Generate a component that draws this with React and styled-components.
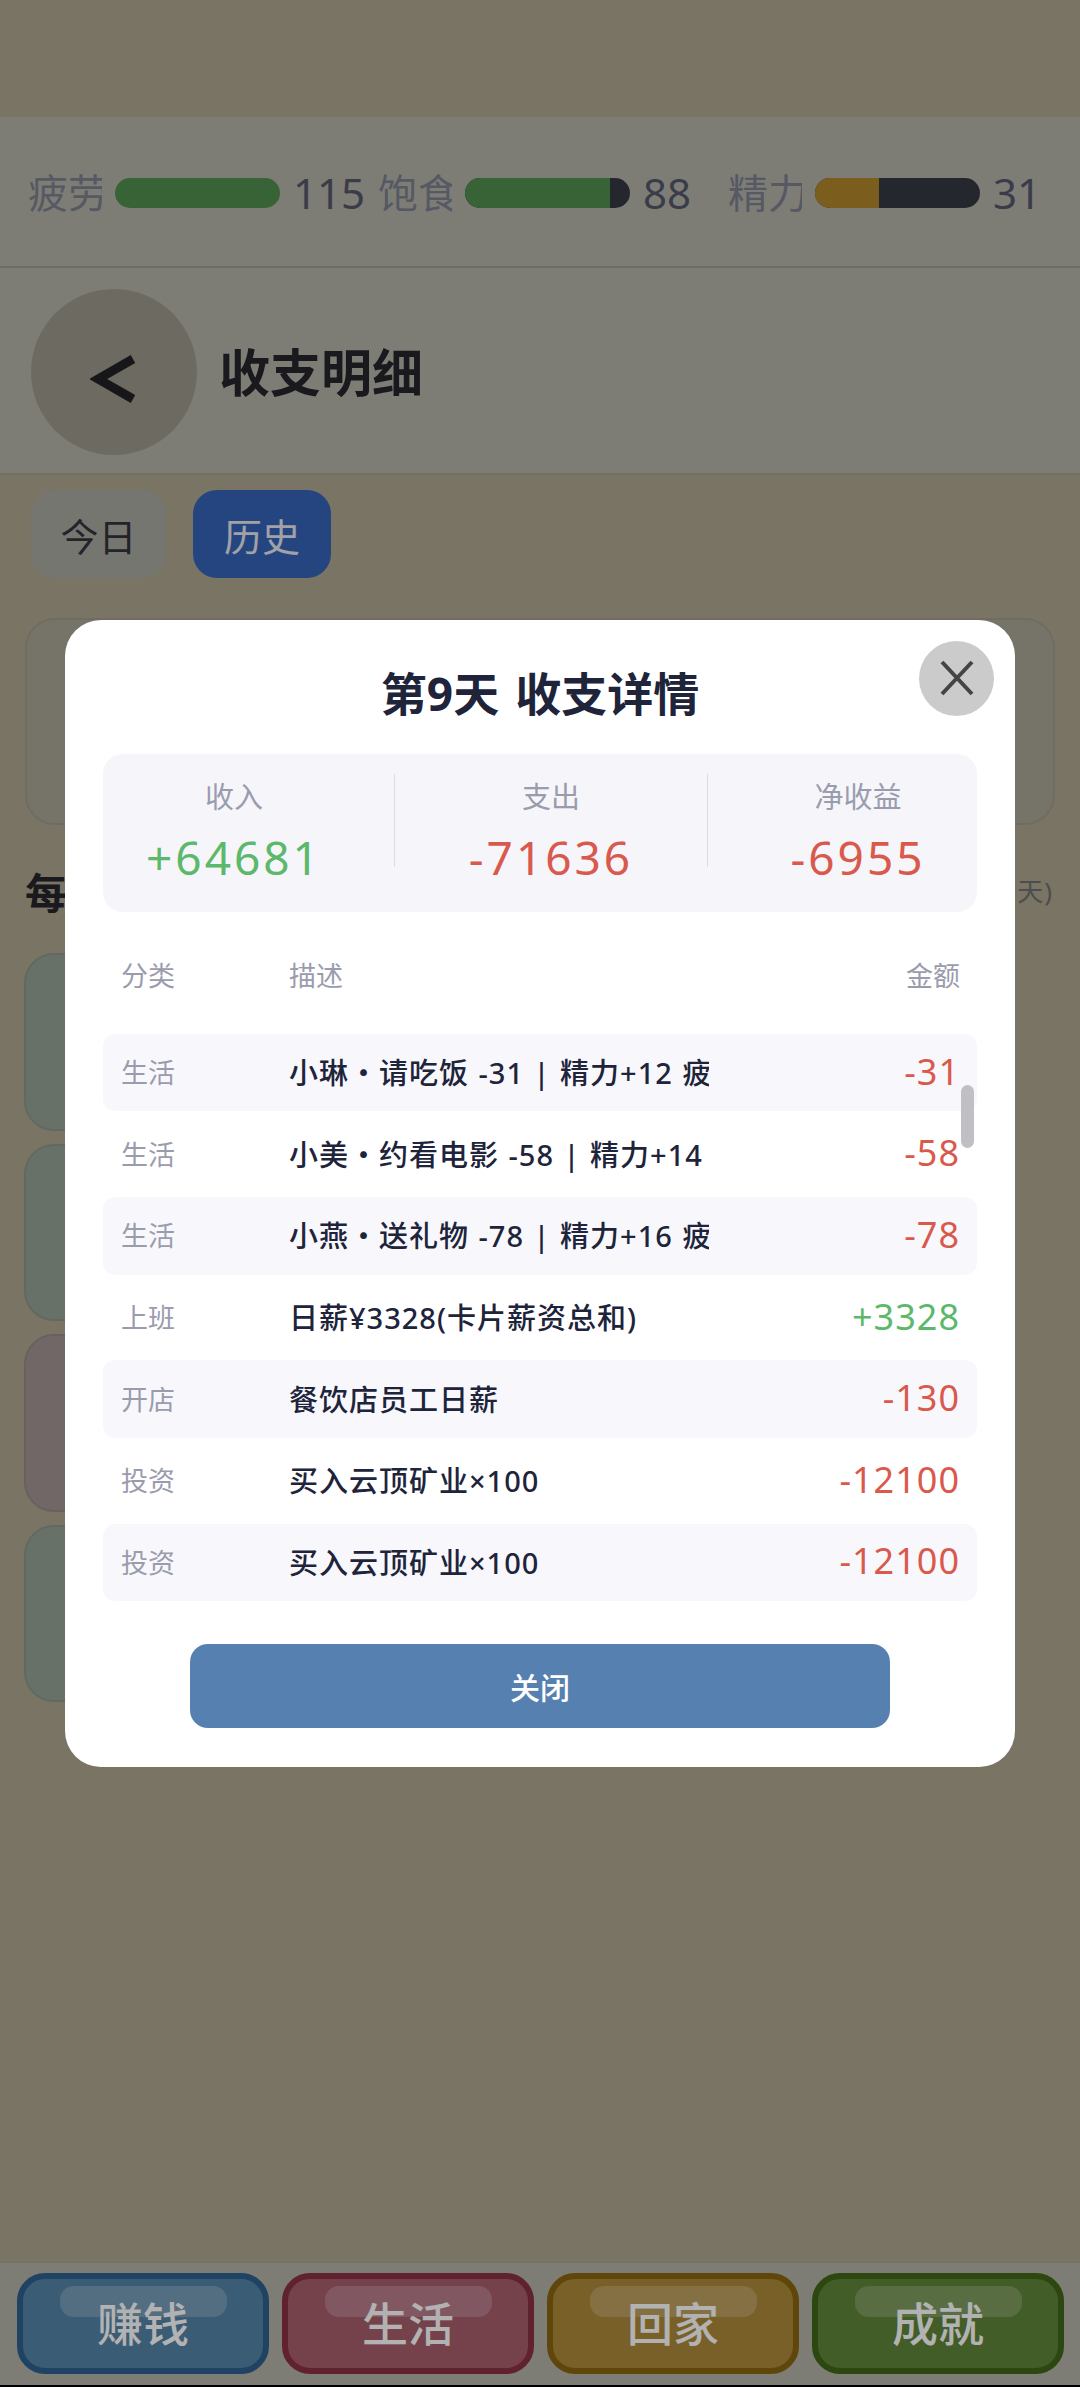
import React from 'react';
import styled, { createGlobalStyle } from 'styled-components';

const Global = createGlobalStyle`
  html, body { margin: 0; padding: 0; background: #aea68f; }
  * { box-sizing: border-box; }
  body { font-family: "Noto Sans", "Noto Sans CJK SC", sans-serif; }
`;

const Page = styled.div`
  position: relative;
  width: 1080px;
  height: 2387px;
  overflow: hidden;
  display: flex;
  flex-direction: column;
  background: repeating-linear-gradient(90deg, #aea68f 0 6px, #afa790 6px 12px);
`;
const TopSpace = styled.div`height: 117px; flex: none;`;
const StatusBar = styled.div`
  height: 151px; flex: none;
  display: flex; align-items: center; gap: 17px;
  padding: 3px 0 0 28px;
  background: #b4b4a9;
  border-bottom: 2px solid #9f9c8f;
`;
const Stat = styled.div`display: flex; align-items: center; gap: 13px; flex: none;`;
const StatLabel = styled.div`
  width: 74px; overflow: hidden; white-space: nowrap;
  font-size: 40px; color: #7c808e; line-height: 50px;
`;
const Bar = styled.div`
  width: 165px; height: 30px; border-radius: 15px; overflow: hidden;
  background: #363842;
`;
const BarFill = styled.div`height: 100%; background: ${p => p.$color};`;
const StatValue = styled.div`
  width: 68px; white-space: nowrap; font-size: 42px; color: #55576a; line-height: 50px;
`;
const Header = styled.div`
  height: 207px; flex: none;
  display: flex; align-items: center; gap: 22px;
  padding: 2px 0 0 31px;
  background: #b4b4a9;
  border-bottom: 2px solid #a69f8b;
`;
const BackBtn = styled.div`
  width: 166px; height: 166px; border-radius: 50%;
  background: #9d998d;
  padding-top: 15px;
  display: flex; align-items: center; justify-content: center;
`;
const PageTitle = styled.div`font-size: 51px; font-weight: 700; color: #26262c; line-height: 60px;`;
const Tabs = styled.div`display: flex; gap: 27px; padding: 15px 0 0 31px;`;
const Tab = styled.div`
  width: ${p => p.$w}px; height: 88px; border-radius: 24px;
  display: flex; align-items: center; justify-content: center;
  font-size: 38px;
  background: ${p => (p.$active ? '#3663b8' : '#a9a9a1')};
  color: ${p => (p.$active ? '#e6e8f0' : '#33333b')};
`;
const SummaryCard = styled.div`
  height: 207px; margin: 40px 25px 0;
  border-radius: 30px;
  background: #aaa796;
  border: 2px solid #a09d8c;
`;
const SectionHead = styled.div`
  display: flex; justify-content: space-between; align-items: center;
  height: 60px; margin: 35px 27px 0 25px;
`;
const SectionTitle = styled.div`font-size: 42px; font-weight: 700; color: #24242c;`;
const SectionNote = styled.div`font-size: 26px; letter-spacing: 1px; color: #6f6f72;`;
const DayList = styled.div`
  display: flex; flex-direction: column; gap: 13px;
  margin: 33px 80px 0 24px;
`;
const DayCard = styled.div`
  height: 177.6px; border-radius: 30px;
  background: ${p => p.$bg}; border: 2px solid ${p => p.$edge};
`;
const Spacer = styled.div`flex: 1;`;
const Nav = styled.div`
  height: 125px; flex: none;
  display: grid; grid-template-columns: repeat(4, 252px); gap: 13px;
  padding: 10px 0 0 17px;
  background: #b4b4a9;
  border-top: 1px solid #a69f8b;
  border-bottom: 2px solid #000;
`;
const NavBtn = styled.div`
  position: relative;
  height: 101px; border-radius: 28px;
  background: ${p => p.$bg};
  border: 6px solid ${p => p.$edge};
  display: flex; align-items: center; justify-content: center;
  font-size: 46px; font-weight: 500; color: #fff; line-height: 1;
  padding-bottom: 2px;
`;
const Gloss = styled.div`
  position: absolute; left: 37px; top: 7px;
  width: 167px; height: 31px; border-radius: 14px;
  background: rgba(255,255,255,.2);
`;
const Overlay = styled.div`
  position: absolute; inset: 0;
  background: rgba(0,0,0,.3);
  display: flex; align-items: center; justify-content: center;
`;
const Modal = styled.div`
  position: relative;
  width: 950px;
  padding: 0 38px 39px;
  border-radius: 36px;
  background: #fff;
  display: flex; flex-direction: column;
`;
const CloseX = styled.div`
  position: absolute; top: 21px; right: 21px;
  width: 75px; height: 75px; border-radius: 50%;
  background: #cbcbcb;
  display: flex; align-items: center; justify-content: center;
`;
const Title = styled.div`
  margin-top: 43px; height: 60px; line-height: 60px; text-align: center;
  font-size: 46px; word-spacing: 4px; font-weight: 700; color: #20243a;
`;
const Summary = styled.div`
  margin-top: 31px; height: 158px;
  display: flex; align-items: stretch; gap: 74px;
  padding: 18px 0 0 45px;
  border-radius: 20px;
  background: #f5f5fa;
`;
const SumCell = styled.div`
  width: ${p => p.$w}px; flex: none; text-align: center; white-space: nowrap;
  display: flex; flex-direction: column; align-items: center;
`;
const SumLabel = styled.div`font-size: 29px; line-height: 50px; color: #9a9cae;`;
const amountColor = p => (p.$up ? '#5cb86a' : '#d9594c');
const SumValue = styled.div`
  font-size: 46px; line-height: 70px; letter-spacing: 3px; color: ${amountColor};
`;
const Divider = styled.div`width: 1px; height: 93px; margin-top: 2px; flex: none; background: #dcdce4;`;
const Row = styled.div`
  height: ${p => p.$h}px;
  display: flex; align-items: center;
  padding: 0 17px 0 18px;
  border-radius: 12px;
  background: ${p => (p.$alt ? '#f8f8fc' : 'transparent')};
`;
const TableHead = styled(Row)`margin-top: 32px;`;
const Cat = styled.div`width: 168px; flex: none; padding-bottom: 2px; font-size: 27px; color: #9a9cae;`;
const HeadDesc = styled.div`flex: 1; padding-bottom: 2px; font-size: 27px; color: #9a9cae;`;
const HeadAmt = styled.div`padding-bottom: 2px; font-size: 27px; color: #9a9cae;`;
const Desc = styled.div`
  width: 420px; flex: none; overflow: hidden; white-space: nowrap;
  padding-bottom: 3px;
  font-size: 29px; letter-spacing: 1px; word-spacing: 1px; font-weight: 500; color: #20243a;
`;
const Amt = styled.div`
  flex: 1; text-align: right; padding-bottom: 3px;
  font-size: 36px; letter-spacing: 1px; color: ${amountColor};
`;
const ListWrap = styled.div`
  position: relative; margin-top: 26px;
  display: flex; flex-direction: column; gap: 4px;
`;
const Thumb = styled.div`
  position: absolute; right: 3px; top: 51px;
  width: 13px; height: 63px; border-radius: 7px;
  background: #c0c0c4;
`;
const CloseBtn = styled.div`
  align-self: center; margin-top: 43px;
  width: 700px; height: 84px; border-radius: 18px;
  background: #5580b0; color: #fff;
  display: flex; align-items: center; justify-content: center;
  font-size: 30px; font-weight: 500;
`;

const stats = [
  { label: '疲劳', value: 115, pct: 100, color: '#4f8f4e' },
  { label: '饱食', value: 88, pct: 88, color: '#4f8f4e' },
  { label: '精力', value: 31, pct: 39, color: '#b0862c' },
];
const days = [
  ['#96a294', '#8c988a'], ['#96a294', '#8c988a'], ['#a39492', '#998a88'], ['#96a294', '#8c988a'],
];
const nav = [
  ['赚钱', '#5585a8', '#2f6090'],
  ['生活', '#a85f6e', '#8a3045'],
  ['回家', '#ad8a3a', '#8a6510'],
  ['成就', '#5f8638', '#3f6618'],
];
const rows = [
  ['生活', '小琳・请吃饭 -31 | 精力+12 疲劳-8', '-31'],
  ['生活', '小美・约看电影 -58 | 精力+14 疲劳-9', '-58'],
  ['生活', '小燕・送礼物 -78 | 精力+16 疲劳-10', '-78'],
  ['上班', '日薪¥3328(卡片薪资总和)', '+3328'],
  ['开店', '餐饮店员工日薪', '-130'],
  ['投资', '买入云顶矿业×100', '-12100'],
  ['投资', '买入云顶矿业×100', '-12100'],
];

export default function App() {
  return (
    <Page>
      <Global />
      <TopSpace />
      <StatusBar>
        {stats.map(s => (
          <Stat key={s.label}>
            <StatLabel>{s.label}</StatLabel>
            <Bar><BarFill $color={s.color} style={{ width: `${s.pct}%` }} /></Bar>
            <StatValue>{s.value}</StatValue>
          </Stat>
        ))}
      </StatusBar>
      <Header>
        <BackBtn>
          <svg width="48" height="50" viewBox="0 0 48 50">
            <polyline points="43,5 8,25 43,45" fill="none" stroke="#222226" strokeWidth="9" />
          </svg>
        </BackBtn>
        <PageTitle>收支明细</PageTitle>
      </Header>
      <Tabs>
        <Tab $w={135}>今日</Tab>
        <Tab $w={138} $active>历史</Tab>
      </Tabs>
      <SummaryCard />
      <SectionHead>
        <SectionTitle>每日明细</SectionTitle>
        <SectionNote>(近9天)</SectionNote>
      </SectionHead>
      <DayList>
        {days.map(([bg, edge], i) => <DayCard key={i} $bg={bg} $edge={edge} />)}
      </DayList>
      <Spacer />
      <Nav>
        {nav.map(([t, bg, edge]) => (
          <NavBtn key={t} $bg={bg} $edge={edge}><Gloss />{t}</NavBtn>
        ))}
      </Nav>
      <Overlay>
        <Modal>
          <CloseX>
            <svg width="36" height="36" viewBox="0 0 36 36">
              <path d="M3 2 L33 34 M33 2 L3 34" fill="none" stroke="#444" strokeWidth="4" />
            </svg>
          </CloseX>
          <Title>第9天 收支详情</Title>
          <Summary>
            <SumCell $w={172}><SumLabel>收入</SumLabel><SumValue $up>+64681</SumValue></SumCell>
            <Divider />
            <SumCell $w={164}><SumLabel>支出</SumLabel><SumValue>-71636</SumValue></SumCell>
            <Divider />
            <SumCell $w={152}><SumLabel>净收益</SumLabel><SumValue>-6955</SumValue></SumCell>
          </Summary>
          <TableHead $h={64}>
            <Cat>分类</Cat><HeadDesc>描述</HeadDesc><HeadAmt>金额</HeadAmt>
          </TableHead>
          <ListWrap>
            {rows.map((r, i) => (
              <Row key={i} $h={77.67} $alt={i % 2 === 0}>
                <Cat>{r[0]}</Cat>
                <Desc>{r[1]}</Desc>
                <Amt $up={r[2][0] === '+'}>{r[2]}</Amt>
              </Row>
            ))}
            <Thumb />
          </ListWrap>
          <CloseBtn>关闭</CloseBtn>
        </Modal>
      </Overlay>
    </Page>
  );
}
